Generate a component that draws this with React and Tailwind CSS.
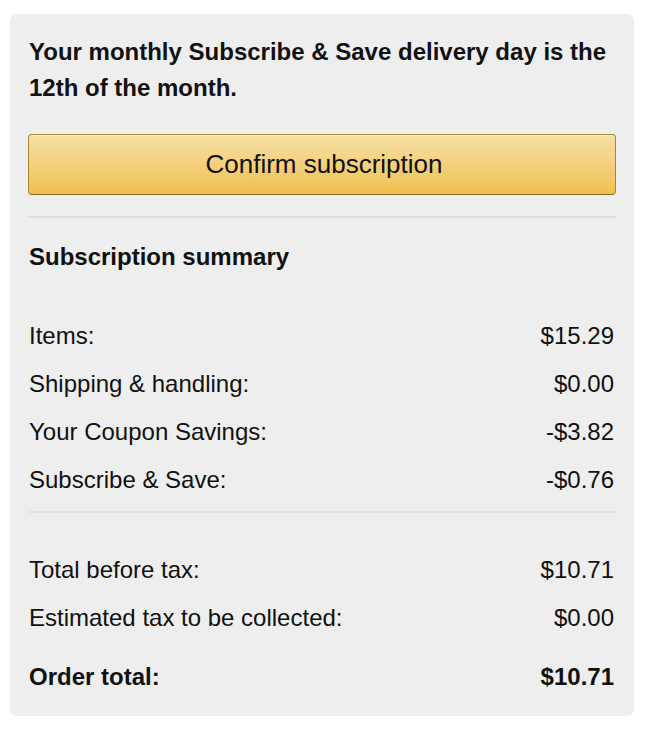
export default function App() {
  const rows = [
    ['Items:', '$15.29'],
    ['Shipping & handling:', '$0.00'],
    ['Your Coupon Savings:', '-$3.82'],
    ['Subscribe & Save:', '-$0.76'],
  ];
  const totals = [
    ['Total before tax:', '$10.71'],
    ['Estimated tax to be collected:', '$0.00'],
  ];

  return (
    <div className="min-h-screen bg-white pt-[14px] pl-[10px] font-['Liberation_Sans',Arial,sans-serif] text-[#111111]">
      <div className="w-[624px] rounded-[7px] bg-[#eeeeee] px-[18px] pt-[20px] pb-[15px]">
        <p className="text-[24px] font-bold leading-[36px] pl-px">
          Your monthly Subscribe &amp; Save delivery day is the 12th of the month.
        </p>

        <button className="mt-[28px] w-full h-[61px] rounded-[4px] border border-[#a88734] border-b-[#846a29] bg-gradient-to-b from-[#f7dfa5] to-[#f0c14b] text-[26px] text-[#111111] pl-[4px] shadow-[inset_0_1px_0_rgba(255,255,255,0.4)]">
          Confirm subscription
        </button>

        <div className="mt-[21px] h-[2px] bg-[#dddddd]" />

        <h2 className="mt-[21px] text-[24px] font-bold leading-[36px] pl-px">Subscription summary</h2>

        <div className="mt-[37px] pl-px pr-[2px]">
          {rows.map(([label, value]) => (
            <div key={label} className="flex h-[48px] items-center justify-between text-[24px]">
              <span>{label}</span>
              <span>{value}</span>
            </div>
          ))}
        </div>

        <div className="mt-[7px] h-[2px] bg-[#e3e3e3]" />

        <div className="mt-[33px] pl-px pr-[2px]">
          {totals.map(([label, value]) => (
            <div key={label} className="flex h-[48px] items-center justify-between text-[24px]">
              <span>{label}</span>
              <span>{value}</span>
            </div>
          ))}
          <div className="mt-[11px] flex h-[48px] items-center justify-between text-[24px] font-bold">
            <span>Order total:</span>
            <span>$10.71</span>
          </div>
        </div>
      </div>
    </div>
  );
}
